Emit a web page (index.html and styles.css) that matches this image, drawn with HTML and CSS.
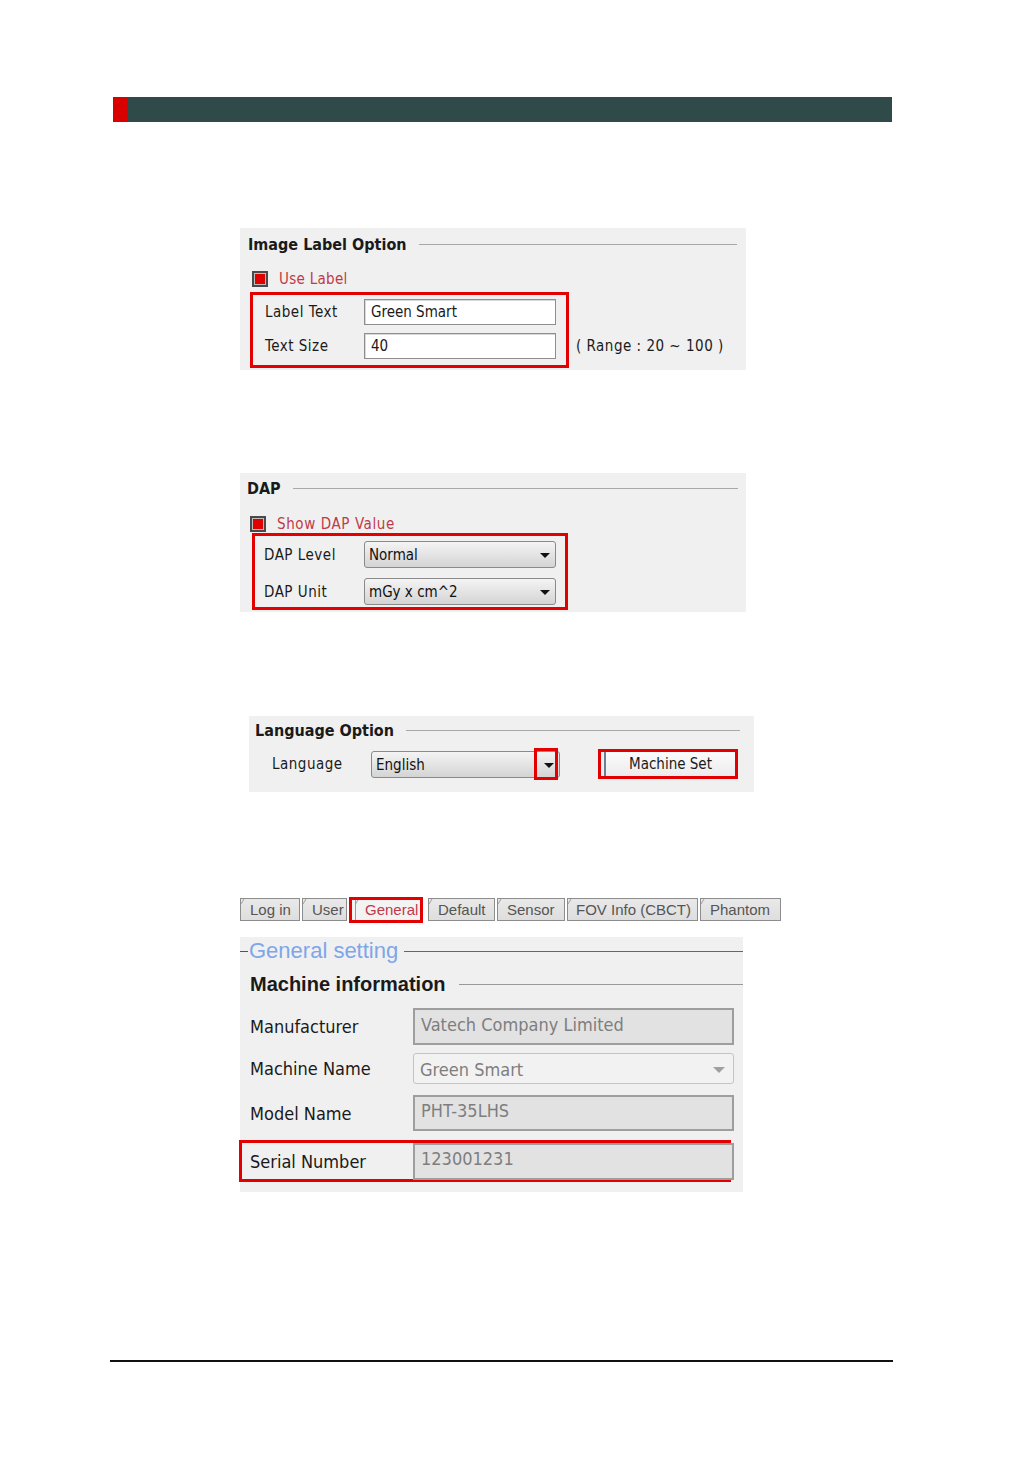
FILE: index.html
```html
<!DOCTYPE html>
<html>
<head>
<meta charset="utf-8">
<link rel="stylesheet" href="styles.css">
</head>
<body>
<div class="page">
  <div class="topbar"><div class="topbar-red"></div></div>

  <section class="panel p-label">
    <div class="legend lg-label"><span class="legend-text">Image Label Option</span><span class="legend-line"></span></div>
    <div class="check-row"><span class="checkbox"></span><span class="check-text">Use Label</span></div>
    <div class="hl-row">
      <div class="hl hl-label">
        <div class="field-row"><span class="flabel">Label Text</span><span class="textbox">Green Smart</span></div>
        <div class="field-row"><span class="flabel">Text Size</span><span class="textbox">40</span></div>
      </div>
      <span class="range">( Range : 20 ~ 100 )</span>
    </div>
  </section>

  <section class="panel p-dap">
    <div class="legend lg-dap"><span class="legend-text">DAP</span><span class="legend-line"></span></div>
    <div class="check-row cr-dap"><span class="checkbox"></span><span class="check-text">Show DAP Value</span></div>
    <div class="hl hl-dap">
      <div class="field-row fr-dap"><span class="flabel">DAP Level</span><span class="combo">Normal<span class="arrow"></span></span></div>
      <div class="field-row fr-dap"><span class="flabel">DAP Unit</span><span class="combo">mGy x cm^2<span class="arrow"></span></span></div>
    </div>
  </section>

  <section class="panel p-lang">
    <div class="legend lg-lang"><span class="legend-text">Language Option</span><span class="legend-line"></span></div>
    <div class="lang-row">
      <span class="flabel lang-label">Language</span>
      <span class="combo combo-lang">English<span class="arrow"></span><span class="arrow-hl"></span></span>
      <span class="btn-hl"><span class="btn">Machine Set</span></span>
    </div>
  </section>

  <nav class="tabs">
    <span class="tab t-login">Log in</span>
    <span class="tab t-user">User</span>
    <span class="tab-hl"><span class="tab tab-active">General</span></span>
    <span class="tab t-default">Default</span>
    <span class="tab t-sensor">Sensor</span>
    <span class="tab t-fov">FOV Info (CBCT)</span>
    <span class="tab t-phantom">Phantom</span>
  </nav>

  <section class="panel p-gen">
    <div class="gen-legend"><span class="gen-dash"></span><span class="gen-text">General setting</span><span class="legend-line"></span></div>
    <div class="legend lg-mi"><span class="legend-text">Machine information</span><span class="legend-line"></span></div>
    <div class="info-row ir-1"><span class="ilabel">Manufacturer</span><span class="ibox">Vatech Company Limited</span></div>
    <div class="info-row ir-2"><span class="ilabel">Machine Name</span><span class="ibox ibox-combo">Green Smart<span class="arrow arrow-light"></span></span></div>
    <div class="info-row ir-3"><span class="ilabel">Model Name</span><span class="ibox">PHT-35LHS</span></div>
    <div class="info-row ir-4"><span class="ilabel">Serial Number</span><span class="ibox">123001231</span></div>
  </section>

  <div class="footer-line"></div>
</div>
</body>
</html>
```

FILE: styles.css
```css
html, body {
  margin: 0;
  padding: 0;
  background: #ffffff;
}

.page {
  position: relative;
  width: 1032px;
  padding-top: 97px;
  font-family: "DejaVu Sans Condensed", "DejaVu Sans", sans-serif;
  color: #1a1a1a;
}

.topbar {
  margin-left: 113px;
  width: 779px;
  height: 25px;
  background: #2f4a49;
  display: flex;
}
.topbar-red {
  width: 15px;
  background: #d90000;
}

/* panels */
.panel {
  background: #f0f0f0;
  box-sizing: border-box;
}
.p-label {
  margin: 106px 0 0 240px;
  width: 506px;
  height: 142px;
  padding: 6px 9px 0 8px;
}
.p-dap {
  margin: 103px 0 0 240px;
  width: 506px;
  height: 139px;
  padding: 5px 8px 0 7px;
}
.p-lang {
  margin: 104px 0 0 249px;
  width: 505px;
  height: 76px;
  padding: 4px 14px 0 6px;
}

.legend {
  display: flex;
  align-items: center;
  height: 20px;
}
.legend-text {
  font-weight: bold;
  font-size: 16px;
  white-space: nowrap;
}
.legend-line {
  flex: 1;
  height: 1px;
  background: #a8a8a8;
  margin-left: 12px;
}

.check-row {
  display: flex;
  align-items: center;
  margin: 17px 0 0 4px;
  height: 16px;
}
.cr-dap { margin: 18px 0 0 3px; }
.checkbox {
  box-sizing: border-box;
  width: 16px;
  height: 16px;
  border: 2px solid #4a4a4a;
  background: #e00000;
  box-shadow: inset 0 0 0 1px #bdbdbd;
}
.check-text {
  margin-left: 11px;
  color: #bf3a48;
  font-size: 15px;
  letter-spacing: 0.3px;
}
.cr-dap .check-text { letter-spacing: 0.6px; }

.hl {
  box-sizing: border-box;
  border: 3px solid #e30000;
}
.hl-row {
  display: flex;
  align-items: flex-end;
  margin: 5px 0 0 2px;
}
.hl-label {
  width: 319px;
  height: 76px;
  padding: 4px 0 0 12px;
}
.range {
  margin: 0 0 13px 7px;
  font-size: 15px;
  letter-spacing: 0.5px;
  white-space: nowrap;
}

.field-row {
  display: flex;
  align-items: center;
  height: 26px;
  margin-bottom: 8px;
}
.flabel {
  width: 99px;
  font-size: 15px;
  letter-spacing: 0.5px;
  white-space: nowrap;
}
.textbox {
  box-sizing: border-box;
  width: 192px;
  height: 26px;
  background: #ffffff;
  border: 1px solid #8e8e8e;
  box-shadow: inset 1px 1px 0 #d8d8d8;
  padding: 0 6px;
  font-size: 15px;
  line-height: 24px;
}

.hl-dap {
  margin: 1px 0 0 5px;
  width: 316px;
  height: 77px;
  padding: 5px 0 0 9px;
}
.fr-dap {
  height: 27px;
  margin-bottom: 10px;
}
.fr-dap .flabel { width: 100px; }

.combo {
  position: relative;
  box-sizing: border-box;
  width: 192px;
  height: 27px;
  border: 1px solid #8a8a8a;
  border-radius: 3px;
  background: linear-gradient(#f4f4f4, #e4e4e4 50%, #d4d4d4);
  padding: 0 4px;
  font-size: 15px;
  line-height: 27px;
  color: #111;
}
.arrow {
  position: absolute;
  right: 5px;
  top: 11px;
  width: 0;
  height: 0;
  border-left: 5px solid transparent;
  border-right: 5px solid transparent;
  border-top: 5px solid #111;
}

.lang-row {
  display: flex;
  align-items: center;
  margin-top: 8px;
  height: 32px;
}
.lang-label {
  width: 99px;
  margin-left: 17px;
}
.combo-lang {
  width: 189px;
}
.arrow-hl {
  position: absolute;
  right: 1px;
  top: -4px;
  width: 24px;
  height: 32px;
  box-sizing: border-box;
  border: 3px solid #e30000;
}
.btn-hl {
  box-sizing: border-box;
  margin-left: 38px;
  width: 140px;
  height: 30px;
  border: 3px solid #e30000;
  padding: 0 0 0 3px;
}
.btn {
  display: block;
  box-sizing: border-box;
  height: 24px;
  border-left: 2px solid #6b7f99;
  background: linear-gradient(#fbfbfb, #ececec);
  text-align: center;
  font-size: 15px;
  line-height: 24px;
}

/* tabs */
.tabs {
  display: flex;
  margin: 105px 0 0 240px;
  height: 26px;
  align-items: flex-start;
  font-family: "Liberation Sans", Arial, sans-serif;
}
.tab {
  position: relative;
  box-sizing: border-box;
  height: 23px;
  margin-top: 1px;
  margin-right: 2px;
  padding: 0 0 0 9px;
  border: 1px solid #8d8d8d;
  background: linear-gradient(#e9e9e9, #dedede);
  color: #555555;
  font-size: 15px;
  line-height: 21px;
  white-space: nowrap;
  overflow: hidden;
}
.tab::before {
  content: "";
  position: absolute;
  left: 1px;
  top: 0;
  width: 1px;
  height: 5px;
  background: #a0a0a0;
  transform: skewX(-30deg);
}
.t-login { width: 60px; }
.t-user { width: 45px; }
.t-default { width: 67px; }
.t-sensor { width: 68px; }
.t-fov { width: 131px; padding-left: 8px; }
.t-phantom { width: 81px; }
.tab-hl {
  box-sizing: border-box;
  height: 26px;
  width: 74px;
  margin-right: 5px;
  border: 3px solid #e30000;
  padding-left: 3px;
  background: #f3f3f3;
}
.tab-active {
  display: block;
  margin: 0;
  height: 20px;
  border: none;
  border-left: 1px solid #9a9a9a;
  background: #f3f3f3;
  color: #c0394a;
  padding: 0 0 0 9px;
  line-height: 20px;
}
.tab-active::before { left: 0; }

/* general */
.p-gen {
  margin: 14px 0 0 240px;
  width: 503px;
  height: 255px;
  padding: 0;
  position: relative;
}
.gen-legend {
  display: flex;
  align-items: center;
  height: 28px;
}
.gen-dash {
  width: 8px;
  height: 1px;
  background: #555;
}
.gen-text {
  margin-left: 1px;
  font-family: "Liberation Sans", Arial, sans-serif;
  font-size: 22px;
  color: #7fa6e8;
  white-space: nowrap;
}
.gen-legend .legend-line {
  margin-left: 6px;
  background: #666;
}
.lg-mi {
  margin: 6px 0 0 10px;
  height: 26px;
}
.lg-mi .legend-text {
  font-family: "Liberation Sans", Arial, sans-serif;
  font-size: 20px;
}
.lg-mi .legend-line {
  margin-left: 13px;
  background: #999;
}

.info-row {
  display: flex;
  align-items: center;
  padding-left: 10px;
}
.ilabel {
  width: 163px;
  font-size: 18px;
  white-space: nowrap;
}
.ibox {
  position: relative;
  box-sizing: border-box;
  width: 321px;
  border: 2px solid #9e9e9e;
  background: #e2e2e2;
  color: #7e7e7e;
  font-size: 18px;
  padding: 0 6px;
}
.ir-1 { margin-top: 11px; }
.ir-1 .ibox { height: 37px; line-height: 30px; }
.ir-2 { margin-top: 8px; }
.ir-2 .ibox { height: 31px; line-height: 31px; }
.ibox-combo {
  border: 1px solid #c4c4c4;
  border-radius: 3px;
  background: #f2f2f2;
}
.arrow-light {
  top: 13px;
  right: 8px;
  border-top-color: #a0a0a0;
  border-left-width: 6px;
  border-right-width: 6px;
  border-top-width: 6px;
}
.ir-3 { margin-top: 11px; }
.ir-3 .ibox { height: 36px; line-height: 28px; }
.ir-4 {
  margin-top: 9px;
  margin-left: -1px;
  padding-left: 8px;
  box-sizing: border-box;
  width: 492px;
  height: 42px;
  border: 3px solid #e30000;
}
.ir-4 .ibox { height: 37px; width: 321px; margin-right: -6px; line-height: 28px; }

.footer-line {
  margin: 168px 0 0 110px;
  width: 783px;
  height: 2px;
  background: #111;
}
```
